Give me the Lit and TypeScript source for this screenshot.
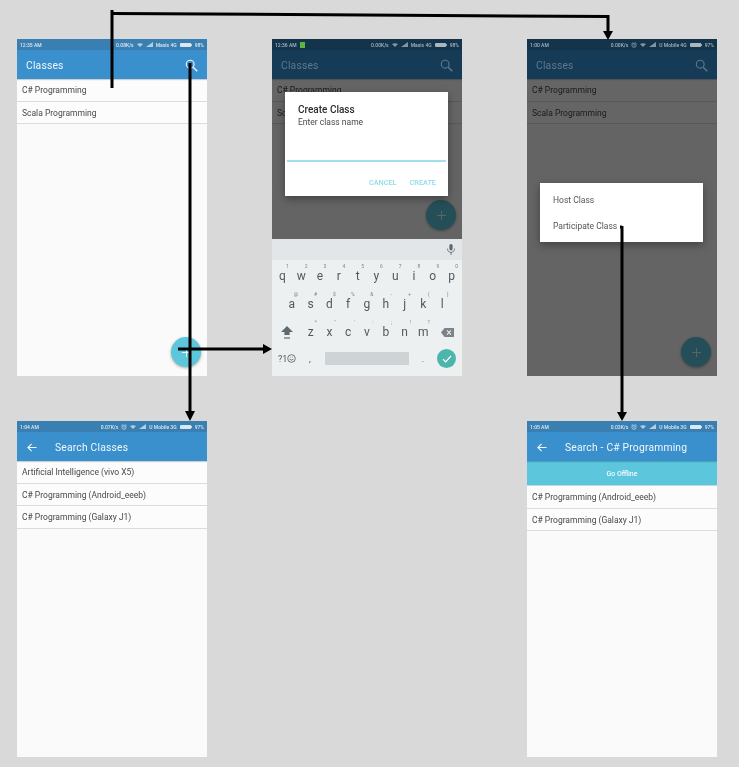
import { LitElement, html, svg, css, nothing } from 'lit';
import { customElement } from 'lit/decorators.js';

interface StatusInfo {
  time: string;
  speed: string;
  carrier: string;
  battery: string;
  alarm?: boolean;
  note?: boolean;
}

const KEY_ROWS = [
  { cls: 'row1', keys: 'qwertyuiop', hints: '1234567890' },
  { cls: 'row2', keys: 'asdfghjkl', hints: '@#$%&-+()' },
  { cls: 'row3', keys: 'zxcvbnm', hints: '*"\':;!?' },
];

@customElement('app-root')
export class AppRoot extends LitElement {
  static styles = css`
    :host {
      display: block;
      width: 739px;
      height: 767px;
      background: #d9d9d9;
      font-family: Roboto, 'Liberation Sans', sans-serif;
      color: #484848;
      overflow: hidden;
    }

    .canvas {
      position: relative;
      width: 739px;
      height: 767px;
      box-sizing: border-box;
      padding: 39px 0 0 17px;
      display: grid;
      grid-template-columns: repeat(3, 190px);
      grid-template-rows: 337px 336px;
      column-gap: 65px;
      row-gap: 45px;
    }

    /* the source picture is a scaled down screenshot, so a touch soft */
    .phone {
      position: relative;
      display: flex;
      flex-direction: column;
      background: #fafafa;
      overflow: hidden;
      filter: blur(0.3px);
    }

    .body {
      position: relative;
      flex: 1;
      min-height: 0;
      display: flex;
      flex-direction: column;
      overflow: hidden;
    }

    /* status bar */
    .status {
      height: 11px;
      flex: none;
      display: flex;
      align-items: center;
      justify-content: space-between;
      padding: 0 3px;
      background: #3a7fb2;
      color: #dbe8f2;
      font-size: 5px;
      font-weight: 500;
    }
    .status-left,
    .status-right {
      display: flex;
      align-items: center;
      gap: 3px;
    }
    .status svg {
      display: block;
    }
    .note {
      width: 5px;
      height: 6px;
      background: #5cb543;
    }

    /* app bar */
    .bar {
      height: 29px;
      flex: none;
      box-sizing: border-box;
      display: flex;
      align-items: center;
      background: #3a8fcd;
      color: #f2f7fb;
      font-size: 10.3px;
      letter-spacing: 0.2px;
      padding: 1px 9px 0;
      box-shadow: 0 1px 1px rgba(0, 0, 0, 0.18);
      position: relative;
      z-index: 1;
    }
    .bar .grow {
      flex: 1;
    }
    .bar.search {
      padding: 1px 0 0 10px;
    }
    .bar.search .title {
      margin-left: 18px;
    }

    .banner {
      height: 25px;
      flex: none;
      display: flex;
      align-items: center;
      justify-content: center;
      background: #5bc6dc;
      color: #f4fbfd;
      font-size: 7px;
      font-weight: 500;
      padding-top: 1px;
      border-bottom: 1px solid #c8d6da;
      box-sizing: border-box;
    }

    /* list rows */
    .row {
      height: 22.5px;
      flex: none;
      box-sizing: border-box;
      display: flex;
      align-items: center;
      padding: 1px 5px 0;
      font-size: 8.5px;
      border-bottom: 1px solid #dcdcdc;
      background: #fcfcfc;
    }

    .scrim {
      position: absolute;
      inset: 0;
      background: rgba(0, 0, 0, 0.6);
      z-index: 2;
    }

    .fab {
      position: absolute;
      right: 6px;
      bottom: 9px;
      width: 30px;
      height: 30px;
      border-radius: 50%;
      background: #5bc6dc;
      box-shadow: 0 1px 3px rgba(0, 0, 0, 0.35);
      display: flex;
      align-items: center;
      justify-content: center;
      z-index: 1;
    }

    /* dialogs */
    .dialog {
      position: absolute;
      left: 13px;
      width: 163px;
      background: #fff;
      z-index: 3;
      box-shadow: 0 3px 8px rgba(0, 0, 0, 0.35);
      box-sizing: border-box;
    }
    .create {
      top: 53px;
      height: 104px;
      display: flex;
      flex-direction: column;
      padding: 12px 2px 0;
    }
    .create h2 {
      margin: 0 0 0 11px;
      font-size: 10px;
      line-height: 11px;
      font-weight: 500;
      color: #2c2c2c;
    }
    .create p {
      margin: 2px 0 0 11px;
      font-size: 8.5px;
      line-height: 10px;
      color: #4a4a4a;
    }
    .input-line {
      height: 2px;
      margin-top: 33px;
      background: #a3e0eb;
      flex: none;
    }
    .actions {
      display: flex;
      justify-content: flex-end;
      gap: 13px;
      margin-top: 16px;
      padding-right: 10px;
      font-size: 7.3px;
      line-height: 9px;
      font-weight: 500;
      color: #8fdbe8;
    }
    .menu {
      top: 144px;
      height: 59px;
      display: flex;
      flex-direction: column;
      padding: 4px 13px;
      font-size: 8.5px;
      color: #555;
    }
    .menu div {
      height: 26px;
      display: flex;
      align-items: center;
      flex: none;
    }

    /* keyboard */
    .keyboard {
      height: 137px;
      flex: none;
      background: #edf0f1;
      display: flex;
      flex-direction: column;
      color: #4f5a60;
    }
    .suggest {
      height: 21px;
      flex: none;
      background: #e2e6e8;
      display: flex;
      align-items: center;
      justify-content: flex-end;
      padding-right: 7px;
    }
    .keys {
      display: flex;
      justify-content: center;
      height: 28px;
      flex: none;
    }
    .key {
      position: relative;
      width: 18.8px;
      display: flex;
      align-items: center;
      justify-content: center;
      padding-top: 3px;
      box-sizing: border-box;
      font-size: 12px;
    }
    .hint {
      position: absolute;
      top: 3px;
      right: 3px;
      font-size: 5px;
      color: #7c868b;
    }
    .side {
      width: 29px;
      flex: none;
      display: flex;
      align-items: center;
      justify-content: center;
      padding-top: 4px;
      box-sizing: border-box;
    }
    .bottom-keys {
      height: 33px;
      flex: none;
      display: flex;
      align-items: center;
      padding: 0 5px 4px 6px;
      box-sizing: border-box;
    }
    .sym {
      width: 21px;
      display: flex;
      align-items: center;
      font-size: 9px;
    }
    .comma {
      width: 26px;
      box-sizing: border-box;
      padding-right: 4px;
      text-align: center;
      font-size: 9px;
    }
    .space {
      width: 84px;
      height: 13px;
      border-radius: 1px;
      background: #ced3d6;
    }
    .period {
      width: 28px;
      text-align: center;
      font-size: 9px;
    }
    .done {
      width: 19px;
      height: 19px;
      border-radius: 50%;
      background: #4db6ac;
      display: flex;
      align-items: center;
      justify-content: center;
      flex: none;
    }

    .arrows {
      position: absolute;
      inset: 0;
      z-index: 5;
      pointer-events: none;
    }
  `;

  private status(s: StatusInfo, dim = false) {
    const fg = dim ? '#a9b6bf' : '#dbe8f2';
    return html`
      <div
        class="status"
        style=${dim ? `background:#13344b;color:${fg}` : ''}
      >
        <div class="status-left">
          <span>${s.time}</span>
          ${s.note ? html`<span class="note"></span>` : nothing}
        </div>
        <div class="status-right">
          <span>${s.speed}</span>
          ${s.alarm
            ? html`<svg width="6" height="6" viewBox="0 0 12 12" fill="none" stroke=${fg} stroke-width="1.3">
                <circle cx="6" cy="6.5" r="4.2"></circle>
                <path d="M6 4v3l1.6 1M1 2.6 3 1M11 2.6 9 1"></path>
              </svg>`
            : nothing}
          <svg width="6" height="4" viewBox="0 0 12 8"><path d="M0 2Q6-1.5 12 2L6 8z" fill=${fg} opacity="0.75"></path></svg>
          <svg width="7" height="5" viewBox="0 0 14 10"><path d="M0 10 14 0v10z" fill=${fg} opacity="0.75"></path></svg>
          <span>${s.carrier}</span>
          <svg width="12" height="4" viewBox="0 0 12 4">
            <rect width="11.2" height="4" rx="1" fill=${fg}></rect>
            <rect x="11.2" y="1" width="0.8" height="2" fill=${fg}></rect>
          </svg>
          <span>${s.battery}</span>
        </div>
      </div>
    `;
  }

  private magnifier(color: string) {
    return html`<svg width="13" height="13" viewBox="0 0 14 14" fill="none" stroke=${color} stroke-width="1.2">
      <circle cx="5.6" cy="5.6" r="4.2"></circle>
      <path d="M8.8 8.8 13.2 13.2" stroke-width="1.5"></path>
    </svg>`;
  }

  private classesBar(dim = false) {
    return html`
      <div class="bar" style=${dim ? 'background:#163b56;color:#5d7a8e' : ''}>
        <span>Classes</span>
        <span class="grow"></span>
        ${this.magnifier(dim ? '#5d7a8e' : '#f2f7fb')}
      </div>
    `;
  }

  private searchBar(title: string) {
    return html`
      <div class="bar search">
        <svg width="10" height="9" viewBox="0 0 10 9" fill="none" stroke="#f2f7fb" stroke-width="1.1">
          <path d="M9.5 4.5H1M4.6 .8 .9 4.5l3.7 3.7"></path>
        </svg>
        <span class="title">${title}</span>
      </div>
    `;
  }

  private rows(items: string[]) {
    return items.map((t) => html`<div class="row">${t}</div>`);
  }

  private fab() {
    return html`
      <div class="fab">
        <svg width="9" height="9" viewBox="0 0 9 9"><path d="M4 0h1v4h4v1H5v4H4V5H0V4h4z" fill="#e9f8fb"></path></svg>
      </div>
    `;
  }

  private keyboard() {
    return html`
      <div class="keyboard">
        <div class="suggest">
          <svg width="8" height="11" viewBox="0 0 8 11" fill="#5d676c">
            <rect x="2.4" y="0" width="3.2" height="6.4" rx="1.6"></rect>
            <path d="M1 4.4v.6a3 3 0 0 0 6 0v-.6h.7v.6A3.7 3.7 0 0 1 4.4 8.7V11H3.6V8.7A3.7 3.7 0 0 1 .3 5v-.6z"></path>
          </svg>
        </div>
        ${KEY_ROWS.map(
          (r) => html`
            <div class="keys ${r.cls}">
              ${r.cls === 'row3'
                ? html`<div class="side">
                    <svg width="12" height="13" viewBox="0 0 12 13" fill="#5f6a70">
                      <path d="M6 0 12 6H8.6v3H3.4V6H0z"></path>
                      <rect x="3" y="11.4" width="6" height="1.2"></rect>
                    </svg>
                  </div>`
                : nothing}
              ${[...r.keys].map(
                (k, i) => html`<div class="key">
                  ${k}<span class="hint">${r.hints[i]}</span>
                </div>`
              )}
              ${r.cls === 'row3'
                ? html`<div class="side">
                    <svg width="13" height="9" viewBox="0 0 13 9">
                      <path d="M3.5 0H13V9H3.5L0 4.5z" fill="#7a8388"></path>
                      <path d="m6 2.4 4 4.2m0-4.2-4 4.2" stroke="#edf0f1" stroke-width="1.1"></path>
                    </svg>
                  </div>`
                : nothing}
            </div>
          `
        )}
        <div class="bottom-keys">
          <div class="sym">
            <span>?1</span>
            <svg width="9" height="9" viewBox="0 0 9 9" fill="none" stroke="#4f5a60" stroke-width="0.8">
              <circle cx="4.5" cy="4.5" r="3.8"></circle>
              <path d="M2.6 5.2q1.9 1.8 3.8 0M3 3.2h.6M5.4 3.2H6"></path>
            </svg>
          </div>
          <div class="comma">,</div>
          <div class="space"></div>
          <div class="period">.</div>
          <div class="done">
            <svg width="10" height="8" viewBox="0 0 10 8" fill="none" stroke="#fff" stroke-width="1.2">
              <path d="M1 4.2 3.6 6.8 9 1"></path>
            </svg>
          </div>
        </div>
      </div>
    `;
  }

  // flow arrows between the screens, in page coordinates
  private arrows() {
    return html`
      <svg class="arrows" width="739" height="767" viewBox="0 0 739 767">
        ${svg`
          <g fill="none" stroke="#000" stroke-width="3">
            <path d="M112 88V10"></path>
            <path d="M112 13.5 608 16.5V32"></path>
            <path d="M190 63V412"></path>
            <path d="M178 349H264"></path>
            <path d="M620 227H622M622 226V413"></path>
          </g>
          <g fill="#000">
            <path d="M603 31H613L608 40z"></path>
            <path d="M185 411H195L190 421z"></path>
            <path d="M263 344V354L272 349z"></path>
            <path d="M617 412H627L622 421z"></path>
          </g>
        `}
      </svg>
    `;
  }

  render() {
    const classes = ['C# Programming', 'Scala Programming'];
    return html`
      <div class="canvas">
        <section class="phone">
          ${this.status({ time: '12:35 AM', speed: '0.08K/s', carrier: 'Maxis 4G', battery: '98%' })}
          ${this.classesBar()}
          <div class="body">${this.rows(classes)} ${this.fab()}</div>
        </section>

        <section class="phone">
          ${this.status({ time: '12:36 AM', speed: '0.00K/s', carrier: 'Maxis 4G', battery: '98%', note: true }, true)}
          ${this.classesBar(true)}
          <div class="body">
            ${this.rows(classes)} ${this.fab()}
            <div class="scrim"></div>
          </div>
          ${this.keyboard()}
          <div class="dialog create">
            <h2>Create Class</h2>
            <p>Enter class name</p>
            <div class="input-line"></div>
            <div class="actions"><span>CANCEL</span><span>CREATE</span></div>
          </div>
        </section>

        <section class="phone">
          ${this.status({ time: '1:00 AM', speed: '0.00K/s', carrier: 'U Mobile 4G', battery: '97%', alarm: true }, true)}
          ${this.classesBar(true)}
          <div class="body">
            ${this.rows(classes)} ${this.fab()}
            <div class="scrim"></div>
          </div>
          <div class="dialog menu">
            <div>Host Class</div>
            <div>Participate Class</div>
          </div>
        </section>

        <section class="phone">
          ${this.status({ time: '1:04 AM', speed: '0.07K/s', carrier: 'U Mobile 3G', battery: '97%', alarm: true })}
          ${this.searchBar('Search Classes')}
          <div class="body">
            ${this.rows(['Artificial Intelligence (vivo X5)', 'C# Programming (Android_eeeb)', 'C# Programming (Galaxy J1)'])}
          </div>
        </section>

        <div></div>

        <section class="phone">
          ${this.status({ time: '1:05 AM', speed: '0.03K/s', carrier: 'U Mobile 3G', battery: '97%', alarm: true })}
          ${this.searchBar('Search - C# Programming')}
          <div class="banner">Go Offline</div>
          <div class="body">
            ${this.rows(['C# Programming (Android_eeeb)', 'C# Programming (Galaxy J1)'])}
          </div>
        </section>

        ${this.arrows()}
      </div>
    `;
  }
}

declare global {
  interface HTMLElementTagNameMap {
    'app-root': AppRoot;
  }
}
